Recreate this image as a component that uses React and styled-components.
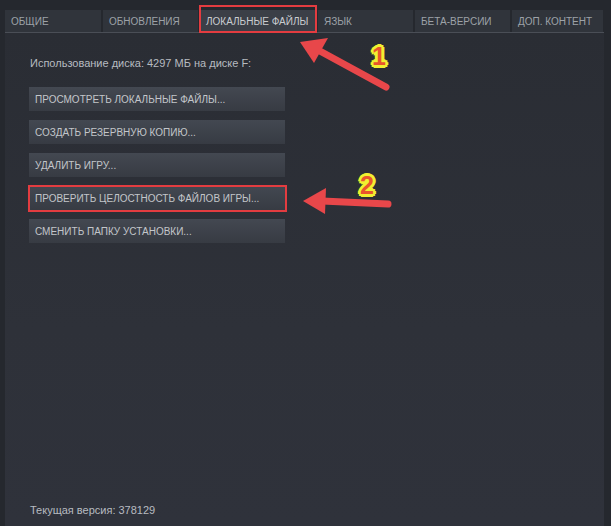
import React from "react";
import styled, { createGlobalStyle } from "styled-components";

const GlobalStyle = createGlobalStyle`
  html, body {
    margin: 0;
    padding: 0;
    background: #25282e;
  }
  body {
    font-family: "Liberation Sans", Arial, sans-serif;
  }
`;

const tabs = [
  { title: "Общие", width: 96 },
  { title: "Обновления", width: 95 },
  { title: "Локальные файлы", width: 116, active: true },
  { title: "Язык", width: 95 },
  { title: "Бета-версии", width: 95 },
  { title: "Доп. контент", width: 91 },
];

const actions = [
  "Просмотреть локальные файлы...",
  "Создать резервную копию...",
  "Удалить игру...",
  "Проверить целостность файлов игры...",
  "Сменить папку установки...",
];

const App = () => {
  return (
    <>
      <GlobalStyle />
      <Window>
        <TabBar>
          {tabs.map((t) => (
            <Tab key={t.title} $width={t.width} $active={t.active}>
              {t.title}
            </Tab>
          ))}
        </TabBar>

        <Content>
          <DiskUsage>Использование диска: 4297 МБ на диске F:</DiskUsage>
          <ActionList>
            {actions.map((a, idx) => (
              <ActionButton key={a} $marked={idx === 3}>
                {a}
              </ActionButton>
            ))}
          </ActionList>
          <Version>Текущая версия: 378129</Version>
        </Content>

        <Arrows width="611" height="526" viewBox="0 0 611 526">
          <ArrowShape d="M386 87 L318 50" />
          <polygon points="300,42 328,38 314,63" fill="#e8474a" />
          <ArrowShape d="M388 204 L322 201" />
          <polygon points="303,201 326,188 325,214" fill="#e8474a" />
        </Arrows>
        <Step $x={372} $y={44}>1</Step>
        <Step $x={360} $y={173}>2</Step>
      </Window>
    </>
  );
};

const Window = styled.div`
  position: relative;
  width: 611px;
  height: 526px;
  box-sizing: border-box;
  padding: 10px 7px 0 5px;
  background: #25282e;
  display: flex;
  flex-direction: column;
  overflow: hidden;
`;

const TabBar = styled.div`
  display: flex;
  gap: 2px;
  height: 22px;
  border-bottom: 1px solid #4a4e56;
`;

const Tab = styled.div`
  width: ${(p) => p.$width}px;
  box-sizing: border-box;
  padding-left: 6px;
  display: flex;
  align-items: center;
  font-size: 10px;
  text-transform: uppercase;
  color: ${(p) => (p.$active ? "#c9ccd0" : "#9da2a8")};
  background: ${(p) => (p.$active ? "#3b3f47" : "#30343b")};
  position: relative;
  ${(p) =>
    p.$active &&
    `
    &::after {
      content: "";
      position: absolute;
      left: -1px;
      right: -1px;
      top: -5px;
      bottom: -1px;
      border: 2px solid #e33c40;
    }
  `}
`;

const Content = styled.div`
  flex: 1;
  display: flex;
  flex-direction: column;
  padding: 24px 0 10px 25px;
  background: linear-gradient(180deg, #2a2d34 0%, #2e3139 60%, #2f323b 100%);
`;

const DiskUsage = styled.div`
  font-size: 11px;
  color: #b7bbc0;
  height: 14px;
`;

const ActionList = styled.div`
  display: flex;
  flex-direction: column;
  gap: 9px;
  margin-top: 16px;
  margin-left: -1px;
`;

const ActionButton = styled.div`
  width: 256px;
  height: 24px;
  box-sizing: border-box;
  padding-left: 6px;
  display: flex;
  align-items: center;
  font-size: 10px;
  text-transform: uppercase;
  color: #c3c6ca;
  background: linear-gradient(180deg, #434851 0%, #373b43 100%);
  position: relative;
  ${(p) =>
    p.$marked &&
    `
    &::after {
      content: "";
      position: absolute;
      inset: -1px -2px -2px -1px;
      border: 2px solid #e33c40;
    }
  `}
`;

const Version = styled.div`
  margin-top: auto;
  font-size: 11px;
  color: #b7bbc0;
`;

const Arrows = styled.svg`
  position: absolute;
  left: 0;
  top: 0;
  pointer-events: none;
`;

const ArrowShape = styled.path`
  stroke: #e8474a;
  stroke-width: 7;
  stroke-linecap: round;
  fill: none;
`;

const Step = styled.div`
  position: absolute;
  left: ${(p) => p.$x}px;
  top: ${(p) => p.$y}px;
  font-size: 25px;
  line-height: 1;
  font-weight: bold;
  color: #e8552c;
  text-shadow: -2px 0 #f0f030, 2px 0 #f0f030, 0 -2px #f0f030, 0 2px #f0f030,
    -2px -2px #f0f030, 2px 2px #f0f030, -2px 2px #f0f030, 2px -2px #f0f030,
    -3px 0 #f0f030, 3px 0 #f0f030, 0 3px #f0f030, 0 -3px #f0f030;
`;

export default App;
